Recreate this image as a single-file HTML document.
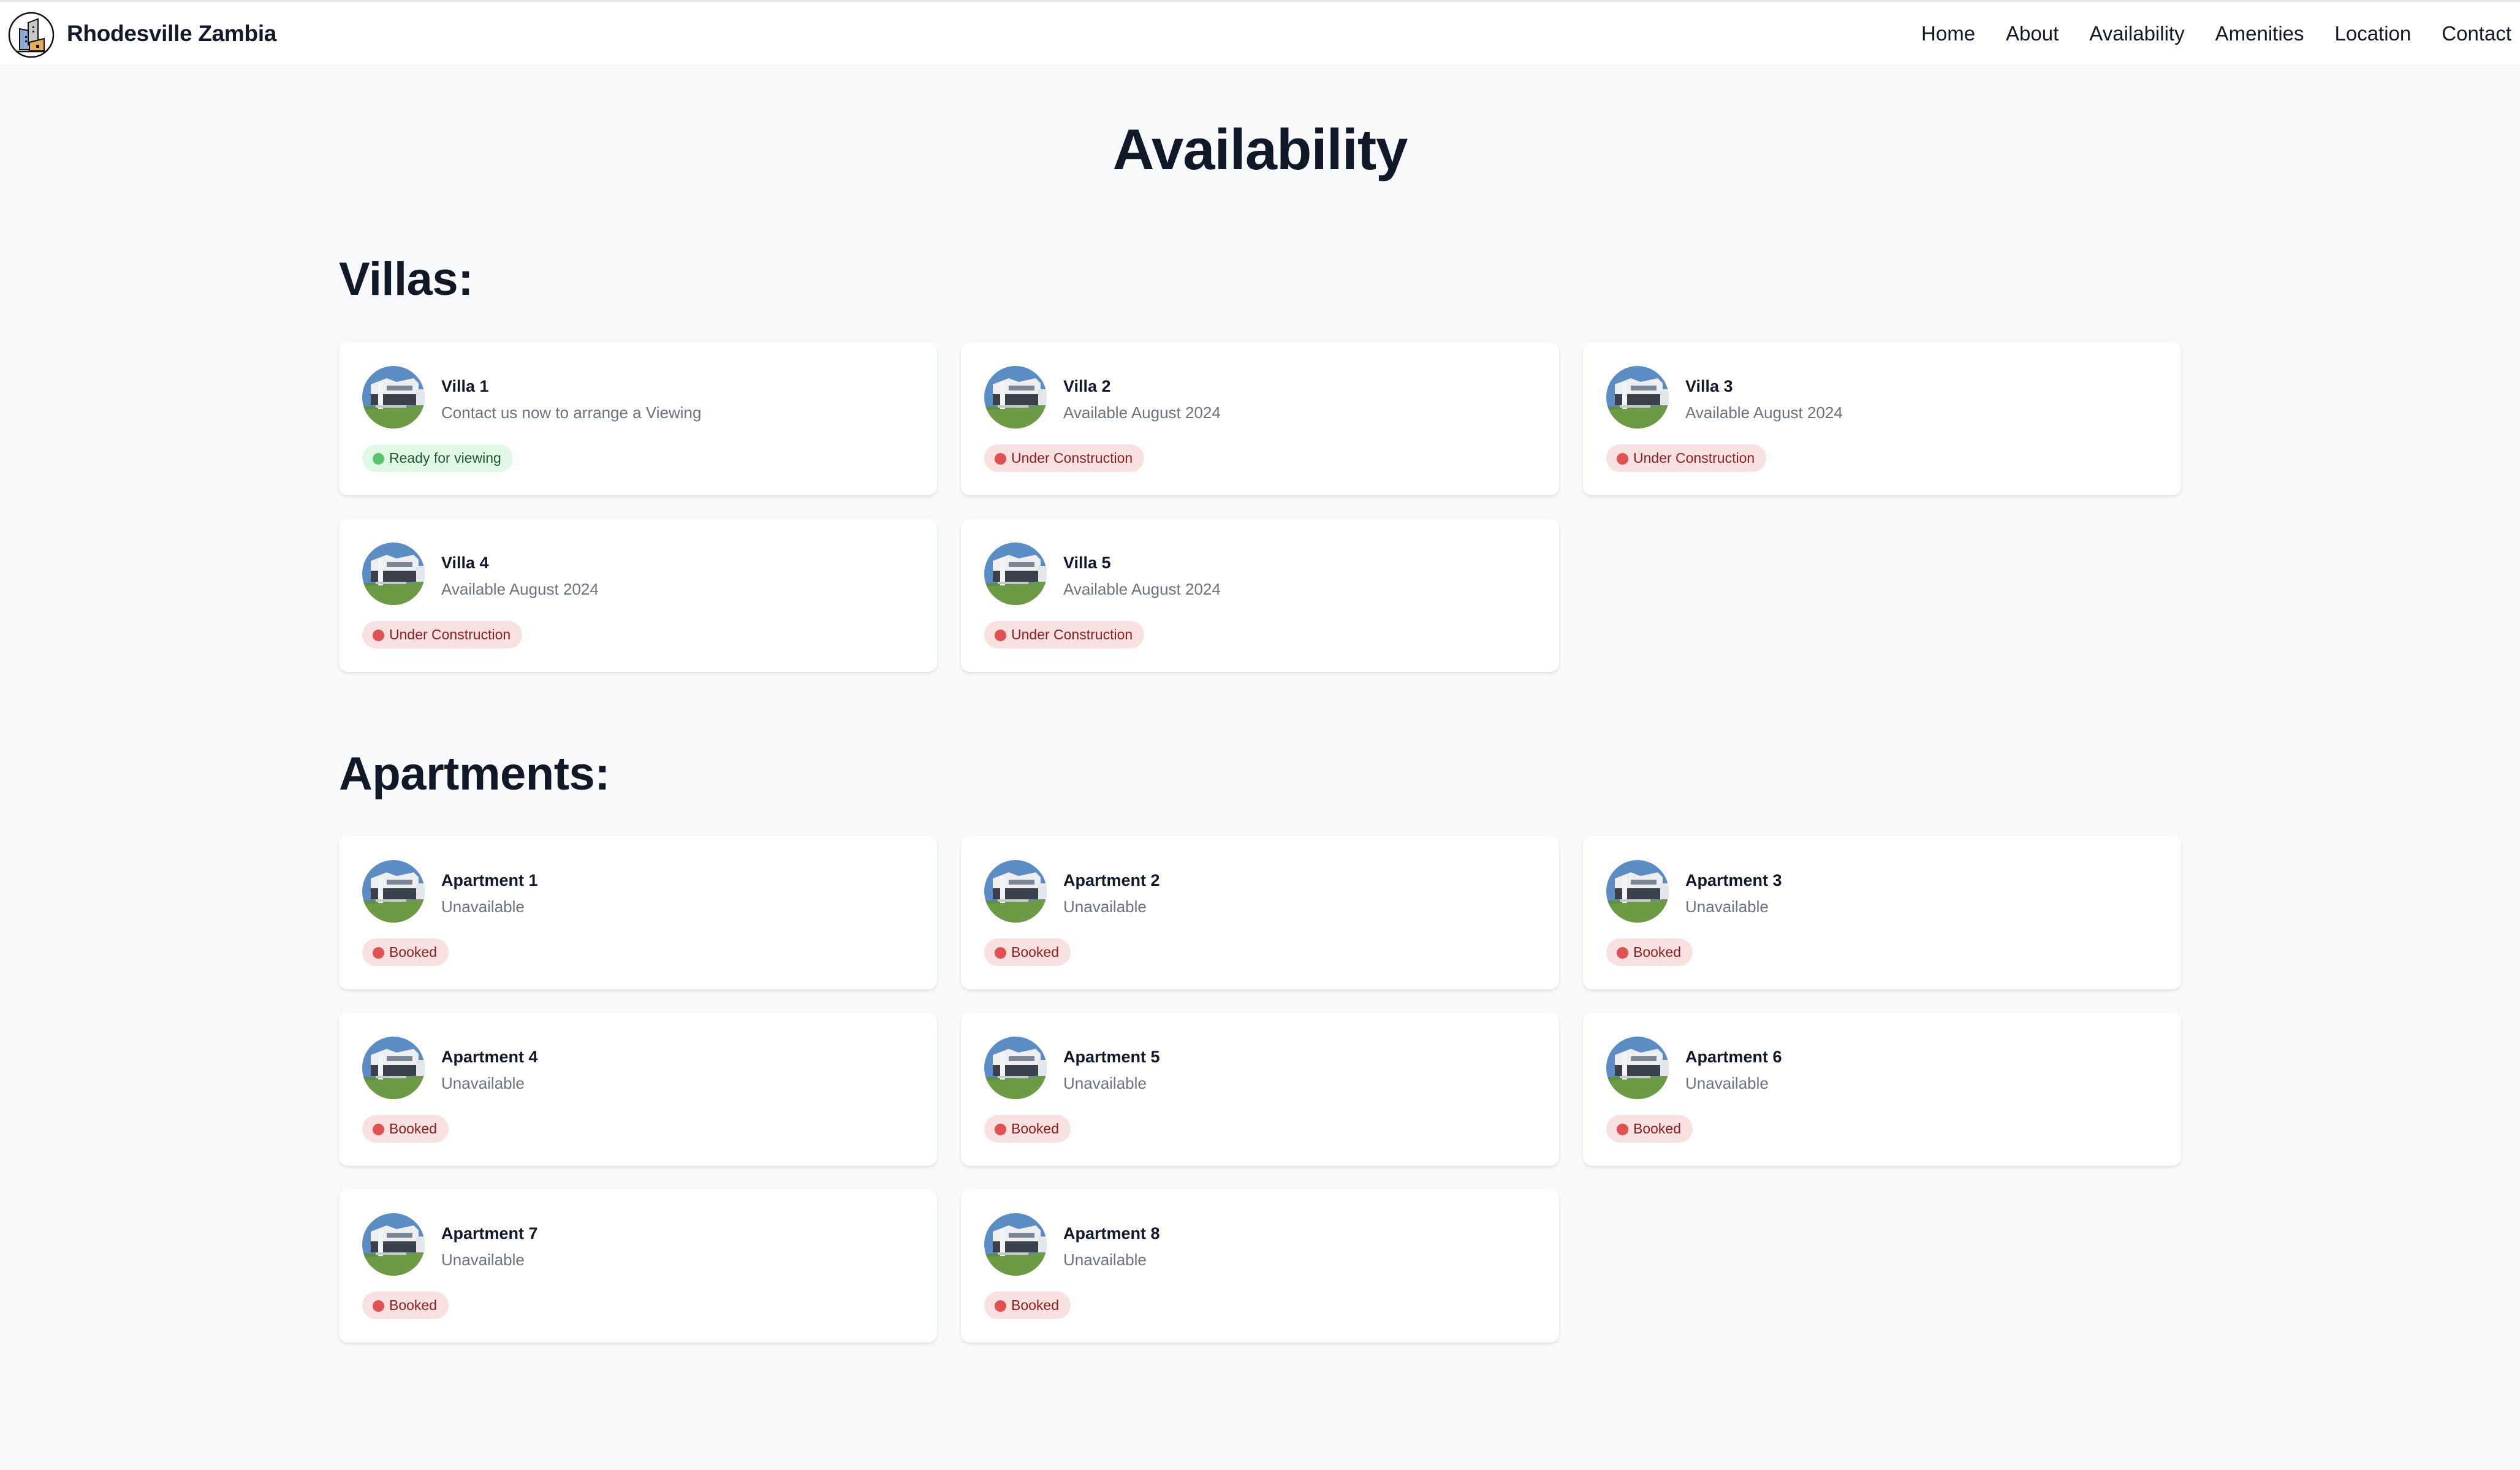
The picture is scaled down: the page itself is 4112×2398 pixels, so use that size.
<!DOCTYPE html>
<html><head><meta charset="utf-8"><style>
*{margin:0;padding:0;box-sizing:border-box}
body{width:4112px;height:2398px;background:#f8f9fb;font-family:"Liberation Sans",sans-serif;color:#111827;position:relative;overflow:hidden}
.nav{position:absolute;left:0;top:0;width:4112px;height:105px;background:#fff;border-top:3px solid #e3e6ea}
.brand{position:absolute;left:109px;top:31px;font-size:37px;font-weight:600;color:#111827;letter-spacing:-0.3px}
.links{position:absolute;right:14px;top:33px;font-size:33px;color:#111827}
.links span{margin-left:50px}
h1{position:absolute;left:0;width:4112px;text-align:center;top:190px;font-size:94px;font-weight:700;letter-spacing:-1px}
h2{position:absolute;left:553px;font-size:76px;font-weight:700;letter-spacing:-0.5px}
.card{position:absolute;width:976px;height:250px;background:#fff;border-radius:14px;box-shadow:0 3px 6px rgba(0,0,0,.08),0 1px 2px rgba(0,0,0,.06)}
.card svg.av{position:absolute;left:38px;top:39px;width:102px;height:102px}
.t{position:absolute;left:167px;top:57px;font-size:27px;font-weight:600;color:#111827}
.s{position:absolute;left:167px;top:100px;font-size:26px;color:#6b7280}
.b{position:absolute;left:38px;top:167px;height:45px;border-radius:23px;padding:0 19px 0 17px;font-size:23px;line-height:45px;white-space:nowrap}
.b i{display:inline-block;width:19px;height:19px;border-radius:50%;vertical-align:-3px;margin-right:8px}
.r{background:#f9e1e1;color:#8b1f1f}.r i{background:#e05252}
.g{background:#e1f8e6;color:#1f5a2c}.g i{background:#58c46b}
</style></head><body>
<svg width="0" height="0" style="position:absolute"><defs>
<clipPath id="cc"><circle cx="51" cy="51" r="51"/></clipPath>
<symbol id="house" viewBox="0 0 102 102"><g clip-path="url(#cc)">
<rect width="102" height="102" fill="#5c8cc4"/>
<rect y="66" width="102" height="36" fill="#5f8f3c"/>
<polygon points="0,72 102,64 102,102 0,102" fill="#6d9b45"/>
<polygon points="14,30 40,20 56,26 84,20 92,28 92,58 14,62" fill="#eceef0"/>
<rect x="14" y="46" width="78" height="18" fill="#3b414a"/>
<rect x="26" y="26" width="8" height="44" fill="#f2f3f4"/>
<rect x="40" y="32" width="42" height="8" fill="#7d8794"/>
<rect x="88" y="38" width="14" height="26" fill="#e4e7ea"/>
<rect x="22" y="64" width="50" height="4" fill="#c9cbc8"/>
</g></symbol>
</defs></svg>

<div class="nav">
<svg style="position:absolute;left:12px;top:14px" width="80" height="80" viewBox="0 0 80 80">
<circle cx="39" cy="40" r="36" fill="#fff" stroke="#111" stroke-width="2.5"/>
<polygon points="20,30 40,34 40,64 20,64" fill="#8fabd6" stroke="#111" stroke-width="2"/>
<polygon points="34,20 50,14 50,56 34,56" fill="#c7c9cc" stroke="#111" stroke-width="2"/>
<polygon points="36,52 60,46 60,66 36,66" fill="#e8ac56" stroke="#111" stroke-width="2"/>
<rect x="41" y="26" width="3" height="3" fill="#111"/><rect x="41" y="33" width="3" height="3" fill="#111"/>
<rect x="29" y="42" width="3" height="3" fill="#111"/><rect x="29" y="49" width="3" height="3" fill="#111"/>
<rect x="47" y="56" width="5" height="5" fill="#111"/>
<line x1="16" y1="67" x2="62" y2="67" stroke="#111" stroke-width="2.5"/>
</svg>
<div class="brand">Rhodesville Zambia</div>
<div class="links"><span>Home</span><span>About</span><span>Availability</span><span>Amenities</span><span>Location</span><span>Contact</span></div>
</div>

<h1>Availability</h1>
<h2 style="top:412px">Villas:</h2>
<h2 style="top:1219px">Apartments:</h2>

<div class="card" style="left:553px;top:558px"><svg class="av"><use href="#house"/></svg><div class="t">Villa 1</div><div class="s">Contact us now to arrange a Viewing</div><div class="b g"><i></i>Ready for viewing</div></div>
<div class="card" style="left:1568px;top:558px"><svg class="av"><use href="#house"/></svg><div class="t">Villa 2</div><div class="s">Available August 2024</div><div class="b r"><i></i>Under Construction</div></div>
<div class="card" style="left:2583px;top:558px"><svg class="av"><use href="#house"/></svg><div class="t">Villa 3</div><div class="s">Available August 2024</div><div class="b r"><i></i>Under Construction</div></div>
<div class="card" style="left:553px;top:846px"><svg class="av"><use href="#house"/></svg><div class="t">Villa 4</div><div class="s">Available August 2024</div><div class="b r"><i></i>Under Construction</div></div>
<div class="card" style="left:1568px;top:846px"><svg class="av"><use href="#house"/></svg><div class="t">Villa 5</div><div class="s">Available August 2024</div><div class="b r"><i></i>Under Construction</div></div>

<div class="card" style="left:553px;top:1364px"><svg class="av"><use href="#house"/></svg><div class="t">Apartment 1</div><div class="s">Unavailable</div><div class="b r"><i></i>Booked</div></div>
<div class="card" style="left:1568px;top:1364px"><svg class="av"><use href="#house"/></svg><div class="t">Apartment 2</div><div class="s">Unavailable</div><div class="b r"><i></i>Booked</div></div>
<div class="card" style="left:2583px;top:1364px"><svg class="av"><use href="#house"/></svg><div class="t">Apartment 3</div><div class="s">Unavailable</div><div class="b r"><i></i>Booked</div></div>
<div class="card" style="left:553px;top:1652px"><svg class="av"><use href="#house"/></svg><div class="t">Apartment 4</div><div class="s">Unavailable</div><div class="b r"><i></i>Booked</div></div>
<div class="card" style="left:1568px;top:1652px"><svg class="av"><use href="#house"/></svg><div class="t">Apartment 5</div><div class="s">Unavailable</div><div class="b r"><i></i>Booked</div></div>
<div class="card" style="left:2583px;top:1652px"><svg class="av"><use href="#house"/></svg><div class="t">Apartment 6</div><div class="s">Unavailable</div><div class="b r"><i></i>Booked</div></div>
<div class="card" style="left:553px;top:1940px"><svg class="av"><use href="#house"/></svg><div class="t">Apartment 7</div><div class="s">Unavailable</div><div class="b r"><i></i>Booked</div></div>
<div class="card" style="left:1568px;top:1940px"><svg class="av"><use href="#house"/></svg><div class="t">Apartment 8</div><div class="s">Unavailable</div><div class="b r"><i></i>Booked</div></div>
</body></html>
